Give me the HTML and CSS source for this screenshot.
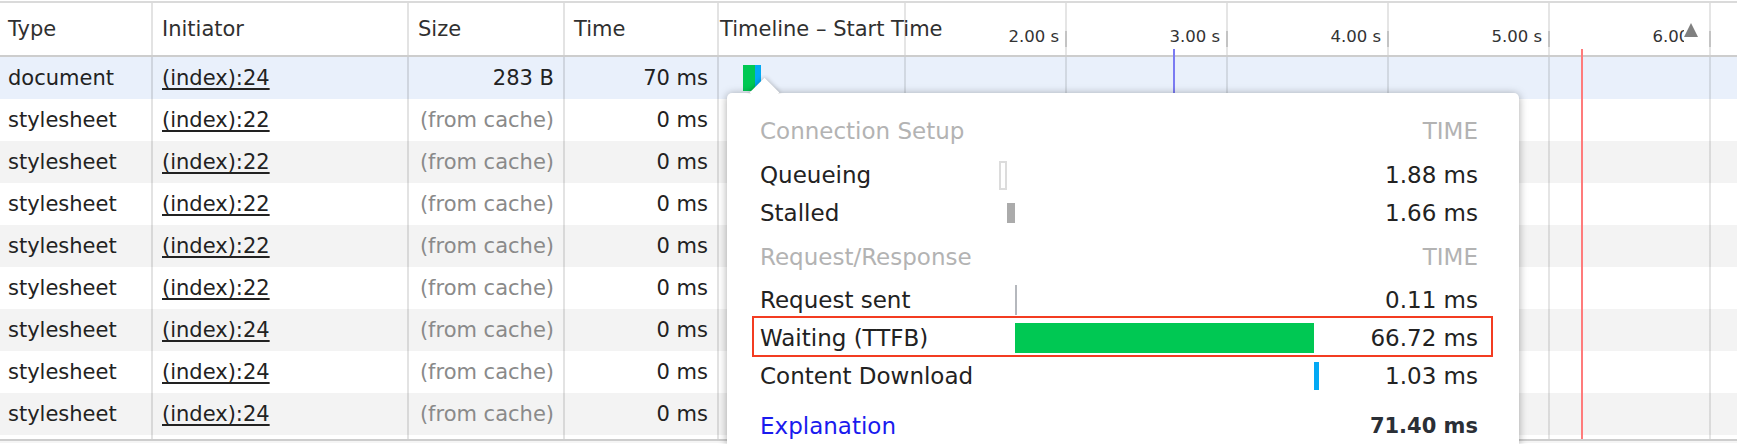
FILE: index.html
```html
<!DOCTYPE html>
<html lang="en">
<head>
<meta charset="utf-8">
<title>Network</title>
<link rel="stylesheet" href="styles.css">
</head>
<body>
<div class="panel">
  <div class="grid">
    <div class="row head">
      <div class="cell c-type">Type</div>
      <div class="cell c-init">Initiator</div>
      <div class="cell c-size">Size</div>
      <div class="cell c-time">Time</div>
      <div class="cell c-tl tl-head">
        <span class="tl-title">Timeline – Start Time</span>
        <div class="ticks">
          <span class="tick">2.00 s</span>
          <span class="tick">3.00 s</span>
          <span class="tick">4.00 s</span>
          <span class="tick">5.00 s</span>
          <span class="tick">6.00 s</span>
        </div>
      </div>
    </div>

    <div class="row sel">
      <div class="cell c-type">document</div>
      <div class="cell c-init"><a class="link" href="#">(index):24</a></div>
      <div class="cell c-size">283 B</div>
      <div class="cell c-time">70 ms</div>
      <div class="cell c-tl"><div class="req-bar"><span class="seg-wait"></span><span class="seg-dl"></span></div></div>
    </div>
    <div class="row">
      <div class="cell c-type">stylesheet</div>
      <div class="cell c-init"><a class="link" href="#">(index):22</a></div>
      <div class="cell c-size muted">(from cache)</div>
      <div class="cell c-time">0 ms</div>
      <div class="cell c-tl"></div>
    </div>
    <div class="row alt">
      <div class="cell c-type">stylesheet</div>
      <div class="cell c-init"><a class="link" href="#">(index):22</a></div>
      <div class="cell c-size muted">(from cache)</div>
      <div class="cell c-time">0 ms</div>
      <div class="cell c-tl"></div>
    </div>
    <div class="row">
      <div class="cell c-type">stylesheet</div>
      <div class="cell c-init"><a class="link" href="#">(index):22</a></div>
      <div class="cell c-size muted">(from cache)</div>
      <div class="cell c-time">0 ms</div>
      <div class="cell c-tl"></div>
    </div>
    <div class="row alt">
      <div class="cell c-type">stylesheet</div>
      <div class="cell c-init"><a class="link" href="#">(index):22</a></div>
      <div class="cell c-size muted">(from cache)</div>
      <div class="cell c-time">0 ms</div>
      <div class="cell c-tl"></div>
    </div>
    <div class="row">
      <div class="cell c-type">stylesheet</div>
      <div class="cell c-init"><a class="link" href="#">(index):22</a></div>
      <div class="cell c-size muted">(from cache)</div>
      <div class="cell c-time">0 ms</div>
      <div class="cell c-tl"></div>
    </div>
    <div class="row alt">
      <div class="cell c-type">stylesheet</div>
      <div class="cell c-init"><a class="link" href="#">(index):24</a></div>
      <div class="cell c-size muted">(from cache)</div>
      <div class="cell c-time">0 ms</div>
      <div class="cell c-tl"></div>
    </div>
    <div class="row">
      <div class="cell c-type">stylesheet</div>
      <div class="cell c-init"><a class="link" href="#">(index):24</a></div>
      <div class="cell c-size muted">(from cache)</div>
      <div class="cell c-time">0 ms</div>
      <div class="cell c-tl"></div>
    </div>
    <div class="row alt">
      <div class="cell c-type">stylesheet</div>
      <div class="cell c-init"><a class="link" href="#">(index):24</a></div>
      <div class="cell c-size muted">(from cache)</div>
      <div class="cell c-time">0 ms</div>
      <div class="cell c-tl"></div>
    </div>
    <div class="row filler">
      <div class="cell c-type"></div>
      <div class="cell c-init"></div>
      <div class="cell c-size"></div>
      <div class="cell c-time"></div>
      <div class="cell c-tl"></div>
    </div>
  </div>
  <div class="footer"></div>

  <div class="marker dcl"></div>
  <div class="marker load"></div>
  <div class="sort-arrow"></div>

  <div class="popover">
    <div class="trow thead"><span>Connection Setup</span><span class="tcol">TIME</span></div>
    <div class="trow gap">
      <span>Queueing</span>
      <div class="track"><span class="bar queue" style="margin-left:0%;width:2.63%"></span></div>
      <span class="val">1.88 ms</span>
    </div>
    <div class="trow">
      <span>Stalled</span>
      <div class="track"><span class="bar stall" style="margin-left:2.63%;width:2.32%"></span></div>
      <span class="val">1.66 ms</span>
    </div>
    <div class="trow thead gap"><span>Request/Response</span><span class="tcol">TIME</span></div>
    <div class="trow gap-s">
      <span>Request sent</span>
      <div class="track"><span class="bar sent" style="margin-left:4.95%;width:0.15%"></span></div>
      <span class="val">0.11 ms</span>
    </div>
    <div class="trow">
      <span>Waiting (TTFB)</span>
      <div class="track"><span class="bar wait" style="margin-left:5.1%;width:93.45%"></span></div>
      <span class="val">66.72 ms</span>
    </div>
    <div class="trow">
      <span>Content Download</span>
      <div class="track"><span class="bar dl" style="margin-left:98.55%;width:1.45%"></span></div>
      <span class="val">1.03 ms</span>
    </div>
    <div class="trow total">
      <a class="explain" href="#">Explanation</a>
      <span></span>
      <span class="val sum">71.40 ms</span>
    </div>
    <div class="highlight"></div>
  </div>
  <div class="popover-tip"><span></span></div>
</div>
</body>
</html>
```

FILE: styles.css
```css
* { box-sizing: border-box; }

html, body {
  margin: 0;
  padding: 0;
}

body {
  width: 1737px;
  height: 444px;
  overflow: hidden;
  background: #fff;
  font-family: "DejaVu Sans", "Liberation Sans", sans-serif;
  color: #222;
}

.panel {
  position: relative;
  height: 444px;
  overflow: hidden;
  padding-top: 1px;
  background: #fff;
}

.grid {
  border-top: 2px solid #dadada;
}

.row {
  display: flex;
  height: 42px;
  background: #fff;
}

.row.alt { background: #f3f3f3; }
.row.sel { background: #e9f0fb; }
.row.filler { height: 4px; }

.row.head {
  height: 54px;
  border-bottom: 2px solid #cdcdcd;
}

.cell {
  display: flex;
  align-items: center;
  border-right: 2px solid rgba(0, 0, 0, 0.11);
  font-size: 21px;
  white-space: nowrap;
  overflow: hidden;
}

.c-type { width: 153px; padding-left: 8px; }
.c-init { width: 256px; padding-left: 9px; }
.c-size { width: 156px; justify-content: flex-end; padding-right: 9px; }
.c-time { width: 154px; justify-content: flex-end; padding-right: 9px; }

.head .cell { color: #303030; }
.head .c-size { justify-content: flex-start; padding-left: 9px; padding-right: 0; }
.head .c-time { justify-content: flex-start; padding-left: 9px; padding-right: 0; }

.c-tl {
  flex: 1;
  border-right: 0;
  --g: linear-gradient(rgba(0, 0, 0, 0.1), rgba(0, 0, 0, 0.1));
  background-image: var(--g), var(--g), var(--g), var(--g), var(--g), var(--g);
  background-size: 2px 100%;
  background-repeat: no-repeat;
  background-position: 185px 0, 346px 0, 507px 0, 668px 0, 829px 0, 990px 0;
}

.muted { color: #8a8a8a; }

.link {
  color: #222;
  text-decoration: underline;
  text-decoration-thickness: 2px;
  text-underline-offset: 3px;
}

/* timeline header */
.tl-head {
  display: grid;
  align-items: stretch;
  overflow: visible;
}

.tl-title {
  grid-area: 1 / 1;
  align-self: center;
  padding-left: 1px;
}

.ticks {
  grid-area: 1 / 1;
  align-self: end;
  display: flex;
  padding-left: 185px;
  padding-bottom: 8px;
}

.tick {
  position: relative;
  width: 161px;
  flex: none;
  text-align: right;
  padding-right: 6px;
  font-size: 16.5px;
  line-height: 20px;
  color: #333;
}

.tick::after {
  content: "";
  position: absolute;
  right: -2px;
  bottom: 0;
  width: 2px;
  height: 16px;
  background: #c4c4c4;
}

/* request bar in row */
.req-bar {
  display: flex;
  margin-left: 24px;
  height: 26px;
}

.seg-wait { width: 12px; background: #00c853; }
.seg-dl { width: 6px; background: #03a9f4; }

.footer {
  border-top: 2px solid #cdcdcd;
  height: 4px;
  background: #f5f5f5;
}

/* overlay markers */
.marker {
  position: absolute;
  top: 49px;
  width: 2px;
  height: 390px;
}

.marker.dcl { left: 1173px; background: #7b7bf2; }
.marker.load { left: 1581px; background: #ff7b7b; }

.sort-arrow {
  position: absolute;
  left: 1684px;
  top: 18px;
  width: 20px;
  height: 30px;
  background: #fff;
}

.sort-arrow::after {
  content: "";
  position: absolute;
  left: 0;
  top: 5px;
  border-left: 7.5px solid transparent;
  border-right: 7.5px solid transparent;
  border-bottom: 14px solid #808080;
}

/* popover */
.popover {
  position: absolute;
  left: 727px;
  top: 93px;
  width: 792px;
  height: 351px;
  background: #fff;
  border-radius: 5px 5px 0 0;
  box-shadow: 0 1px 8px rgba(0, 0, 0, 0.35);
  padding: 19px 41px 0 33px;
  font-size: 23px;
  color: #222;
}

.trow {
  display: grid;
  grid-template-columns: 239px 320px 1fr;
  align-items: center;
  height: 38px;
  white-space: nowrap;
}

.trow.gap { margin-top: 6px; }
.trow.gap-s { margin-top: 5px; }
.trow.total { margin-top: 12px; }

.thead {
  display: flex;
  justify-content: space-between;
  color: #b3b3b3;
}

.track {
  display: flex;
  align-items: center;
  height: 100%;
}

.bar { display: block; flex: none; }
.bar.queue { height: 29px; border: 2px solid #dcdcdc; min-width: 7px; }
.bar.stall { height: 20px; background: #ababab; }
.bar.sent { height: 30px; min-width: 2px; background: #b5b8bd; }
.bar.wait { height: 30px; background: #00c853; }
.bar.dl { height: 28px; min-width: 4px; background: #03a9f4; }

.val { text-align: right; }

.explain {
  color: #1a1aee;
  text-decoration: none;
}

.val.sum {
  font-weight: bold;
  font-size: 21px;
  color: #2a2f36;
}

.highlight {
  position: absolute;
  left: 25px;
  top: 223px;
  width: 741px;
  height: 41px;
  border: 2px solid #f33c21;
}

.popover-tip {
  position: absolute;
  left: 742px;
  top: 75px;
  width: 44px;
  height: 19px;
  overflow: hidden;
}

.popover-tip span {
  position: absolute;
  left: 11.5px;
  top: 7.4px;
  width: 21px;
  height: 21px;
  background: #fff;
  transform: rotate(45deg);
  box-shadow: 0 0 5px rgba(0, 0, 0, 0.3);
}
```
